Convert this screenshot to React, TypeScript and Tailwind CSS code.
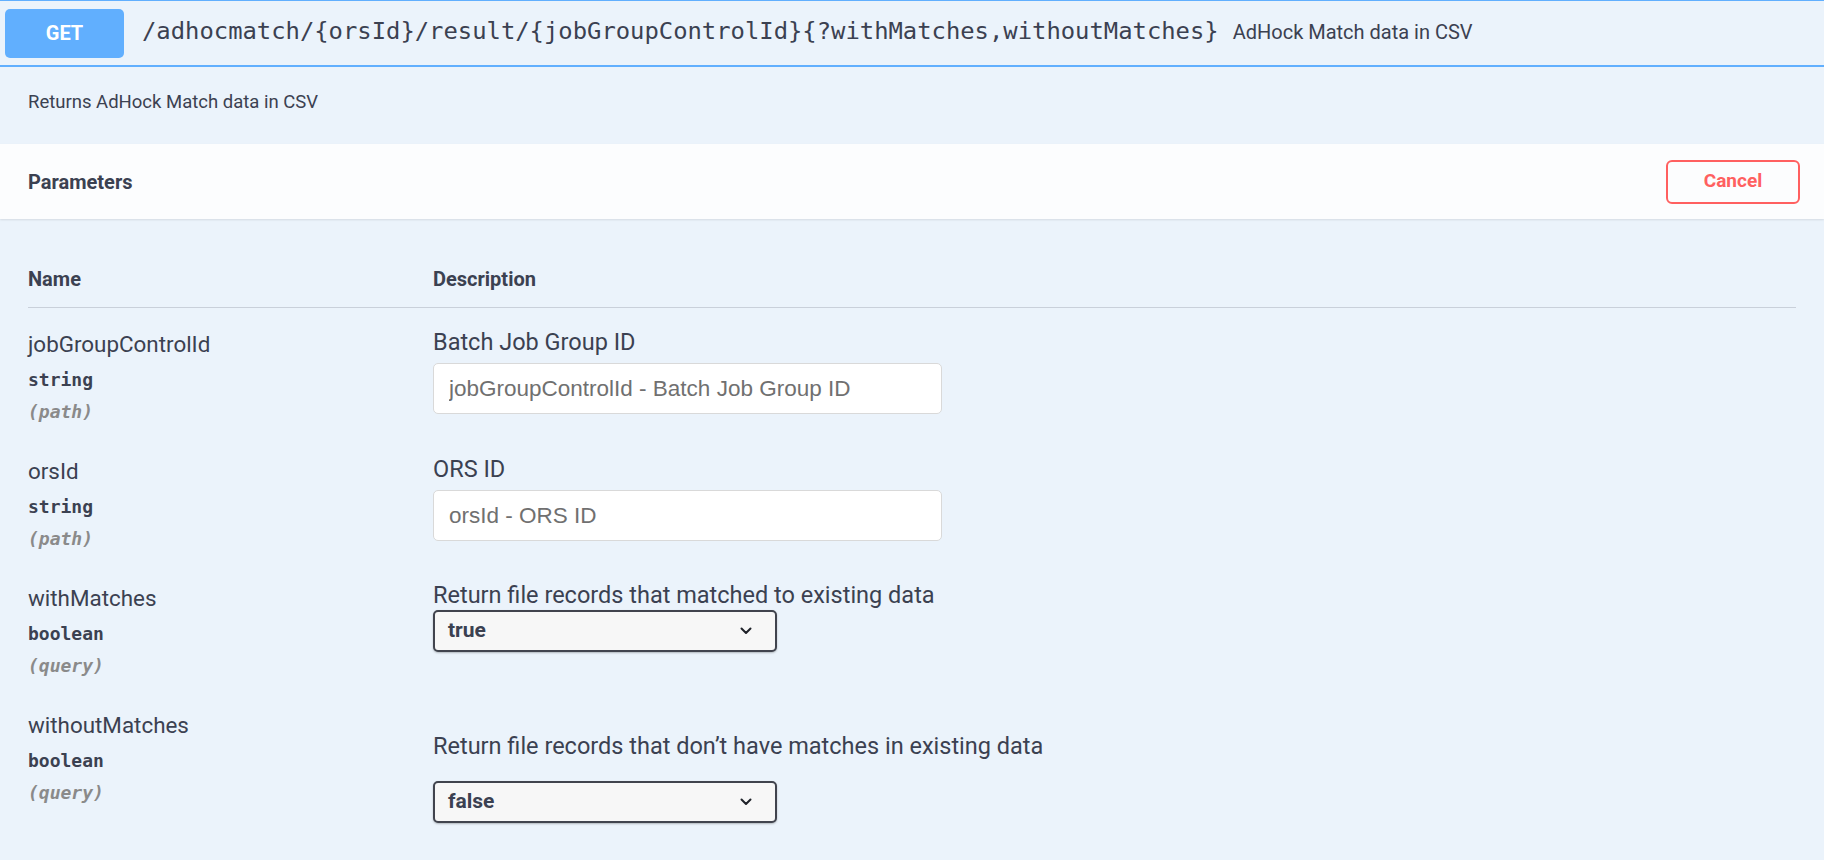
import React from 'react';

type Param = {
  name: string;
  type: string;
  where: string;
  desc: string;
  kind: 'input' | 'select';
  placeholder?: string;
  value?: string;
  spaced?: boolean;
};

const params: Param[] = [
  { name: 'jobGroupControlId', type: 'string', where: 'path', desc: 'Batch Job Group ID', kind: 'input', placeholder: 'jobGroupControlId - Batch Job Group ID' },
  { name: 'orsId', type: 'string', where: 'path', desc: 'ORS ID', kind: 'input', placeholder: 'orsId - ORS ID' },
  { name: 'withMatches', type: 'boolean', where: 'query', desc: 'Return file records that matched to existing data', kind: 'select', value: 'true' },
  { name: 'withoutMatches', type: 'boolean', where: 'query', desc: 'Return file records that don’t have matches in existing data', kind: 'select', value: 'false', spaced: true },
];

function Chevron() {
  return (
    <svg width="14" height="14" viewBox="0 0 14 14" fill="none">
      <path d="M2.5 4.5L7 9l4.5-4.5" stroke="#1f2229" strokeWidth="2" strokeLinecap="round" strokeLinejoin="round" />
    </svg>
  );
}

function ParamRow({ p }: { p: Param }) {
  return (
    <div className="flex">
      <div className="w-[405px] shrink-0 pt-[24px] pb-[12px]">
        <div className="text-[22.4px] leading-[24px] text-[#3b4151]">{p.name}</div>
        <div className="mt-[13px] font-['DejaVu_Sans_Mono',monospace] font-bold text-[18px] leading-[22px] text-[#3b4151]">{p.type}</div>
        <div className="mt-[10px] font-['DejaVu_Sans_Mono',monospace] font-bold italic text-[18px] leading-[22px] text-[#8a8a8a]">({p.where})</div>
      </div>
      <div className={p.spaced ? 'pt-[45px]' : p.kind === 'select' ? 'pt-[21px]' : 'pt-[22px]'}>
        <div className="text-[23.5px] leading-[24px] text-[#3b4151]">{p.desc}</div>
        {p.kind === 'input' ? (
          <input
            type="text"
            placeholder={p.placeholder}
            className="mt-[9px] block w-[509px] h-[51px] rounded-[5px] border border-[#d9d9d9] bg-white px-[15px] font-['Liberation_Sans',Arial,sans-serif] text-[22.5px] text-[#3b4151] placeholder:text-[#707070] outline-none"
          />
        ) : (
          <div className={`${p.spaced ? 'mt-[23px]' : 'mt-[3px]'} flex items-center justify-between w-[344px] h-[42px] rounded-[5px] border-2 border-[#41444e] bg-[#f7f7f7] pl-[13px] pr-[22px] shadow-[0_1px_2px_rgba(0,0,0,0.25)]`}>
            <span className="text-[21px] font-bold text-[#3b4151]">{p.value}</span>
            <Chevron />
          </div>
        )}
      </div>
    </div>
  );
}

export default function App() {
  return (
    <div className="min-h-screen w-full bg-[#ebf3fb] font-['Roboto',sans-serif] text-[#3b4151]">
      {/* summary bar */}
      <div className="flex items-center h-[67px] border-t border-b-2 border-[#61affe] pl-[5px]">
        <div className="flex items-center justify-center w-[119px] h-[49px] rounded-[5px] bg-[#61affe] text-white text-[20px] font-bold">
          GET
        </div>
        <div className="ml-[18px] font-['DejaVu_Sans_Mono',monospace] text-[23.85px] text-[#3b4151] pb-[3px]">
          /adhocmatch/{'{orsId}'}/result/{'{jobGroupControlId}'}{'{?withMatches,withoutMatches}'}
        </div>
        <div className="ml-[14px] text-[20px] text-[#3b4151] pb-[3px]">AdHock Match data in CSV</div>
      </div>

      {/* description */}
      <div className="h-[77px] pl-[28px] pt-[23px]">
        <p className="text-[18.5px] leading-[24px]">Returns AdHock Match data in CSV</p>
      </div>

      {/* parameters header */}
      <div className="flex items-center justify-between h-[75px] bg-[#fcfdfe] pl-[28px] pr-[24px] shadow-[0_1px_2px_rgba(0,0,0,0.1)]">
        <h4 className="text-[20px] font-bold">Parameters</h4>
        <button className="w-[134px] h-[44px] rounded-[6px] border-2 border-[#ff6060] bg-transparent text-[19px] font-bold text-[#ff6060]">
          Cancel
        </button>
      </div>

      {/* table */}
      <div className="px-[28px] pt-[48px]">
        <div className="flex border-b border-[#c9d0da] pb-[16px]">
          <div className="w-[405px] text-[20px] font-bold leading-[24px]">Name</div>
          <div className="text-[20px] font-bold leading-[24px]">Description</div>
        </div>
        {params.map((p) => (
          <ParamRow key={p.name} p={p} />
        ))}
      </div>
    </div>
  );
}
